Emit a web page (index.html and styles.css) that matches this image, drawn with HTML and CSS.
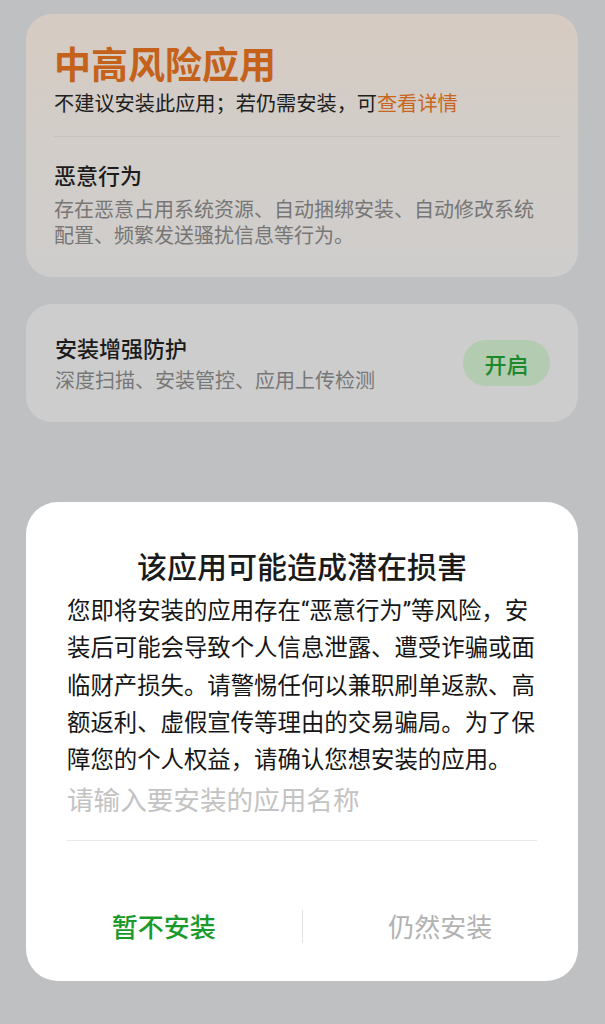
FILE: index.html
```html
<!DOCTYPE html>
<html lang="zh-CN">
<head>
<meta charset="utf-8">
<title>安装提示</title>
<link rel="stylesheet" href="styles.css">
</head>
<body>
<main class="page">
  <section class="card risk-card">
    <h1 class="risk-title">中高风险应用</h1>
    <p class="risk-sub">不建议安装此应用；若仍需安装，可<span class="link">查看详情</span></p>
    <div class="divider"></div>
    <h2 class="item-title">恶意行为</h2>
    <p class="item-desc">存在恶意占用系统资源、自动捆绑安装、自动修改系统配置、频繁发送骚扰信息等行为。</p>
  </section>

  <section class="card protect-card">
    <div class="protect-text">
      <h2 class="item-title">安装增强防护</h2>
      <p class="protect-desc">深度扫描、安装管控、应用上传检测</p>
    </div>
    <button class="pill">开启</button>
  </section>

  <section class="dialog">
    <h2 class="dialog-title">该应用可能造成潜在损害</h2>
    <p class="dialog-body">您即将安装的应用存在“恶意行为”等风险，安装后可能会导致个人信息泄露、遭受诈骗或面临财产损失。请警惕任何以兼职刷单返款、高额返利、虚假宣传等理由的交易骗局。为了保障您的个人权益，请确认您想安装的应用。</p>
    <input class="name-input" type="text" placeholder="请输入要安装的应用名称">
    <div class="actions">
      <button class="action primary">暂不安装</button>
      <span class="sep"></span>
      <button class="action muted">仍然安装</button>
    </div>
  </section>
</main>
</body>
</html>
```

FILE: styles.css
```css
* { box-sizing: border-box; }

html, body {
  margin: 0;
  padding: 0;
  background: #bfc0c2;
}

body {
  font-family: "Noto Sans CJK SC", "Noto Sans", sans-serif;
  color: #1b1b1b;
}

.page {
  padding: 14px 27px 0 26px;
  display: flex;
  flex-direction: column;
}

h1, h2, p { margin: 0; }

.card {
  border-radius: 26px;
}

.risk-card {
  background: linear-gradient(180deg, #d6cbc2 0%, #d2cdc8 45%, #cfcdcc 100%);
  padding: 27px 29px 29px 28px;
}

.risk-title {
  font-size: 37px;
  line-height: 44px;
  font-weight: 700;
  color: #c4621b;
}

.risk-sub {
  margin-top: 4px;
  font-size: 20.2px;
  line-height: 28px;
  color: #202020;
}

.link { color: #c8661f; }

.divider {
  height: 1px;
  background: #c6c2be;
  margin: 19px -11px 22px 0;
}

.item-title {
  font-size: 22px;
  line-height: 30px;
  font-weight: 500;
  color: #1c1c1c;
}

.item-desc {
  margin-top: 7px;
  font-size: 20px;
  line-height: 26px;
  color: #777675;
}

.protect-card {
  margin-top: 27px;
  background: #cdcdce;
  padding: 28px 28px 29px 29px;
  display: flex;
  align-items: center;
  justify-content: space-between;
}

.protect-desc {
  margin-top: 5px;
  font-size: 20px;
  line-height: 26px;
  color: #777777;
}

.pill {
  font-family: inherit;
  border: 0;
  height: 46px;
  width: 87px;
  border-radius: 23px;
  background: #b3cbb1;
  color: #1c8a2c;
  font-size: 22px;
  font-weight: 500;
  padding: 0;
}

.dialog {
  margin-top: 80px;
  background: #ffffff;
  border-radius: 32px;
  padding: 43px 41px 30px 41px;
  display: flex;
  flex-direction: column;
}

.dialog-title {
  text-align: center;
  font-size: 30px;
  line-height: 40px;
  font-weight: 500;
  color: #1a1a1a;
}

.dialog-body {
  margin-top: 8px;
  font-family: Roboto, "Noto Sans CJK SC", sans-serif;
  font-size: 23.4px;
  line-height: 37.3px;
  color: #161616;
}

.name-input {
  margin-top: 2px;
  width: 100%;
  height: 60px;
  border: 0;
  border-bottom: 1px solid #e9e9e9;
  padding: 0 0 24px 0;
  font-family: "Noto Sans CJK SC", sans-serif;
  font-size: 26.6px;
  line-height: 36px;
  outline: none;
  background: transparent;
  color: #1e1e1e;
}

.name-input::placeholder { color: #c3c3c3; }

.actions {
  margin: 60px -41px 0 -41px;
  height: 50px;
  display: flex;
  align-items: center;
}

.action {
  flex: 1;
  border: 0;
  background: transparent;
  font-family: "Noto Sans CJK SC", sans-serif;
  font-size: 26px;
  line-height: 50px;
  padding: 0;
}

.action.primary {
  color: #1a9a2b;
  font-weight: 500;
}

.action.muted {
  color: #b2b2b2;
}

.sep {
  width: 1px;
  height: 33px;
  background: #e3e3e3;
}
```
